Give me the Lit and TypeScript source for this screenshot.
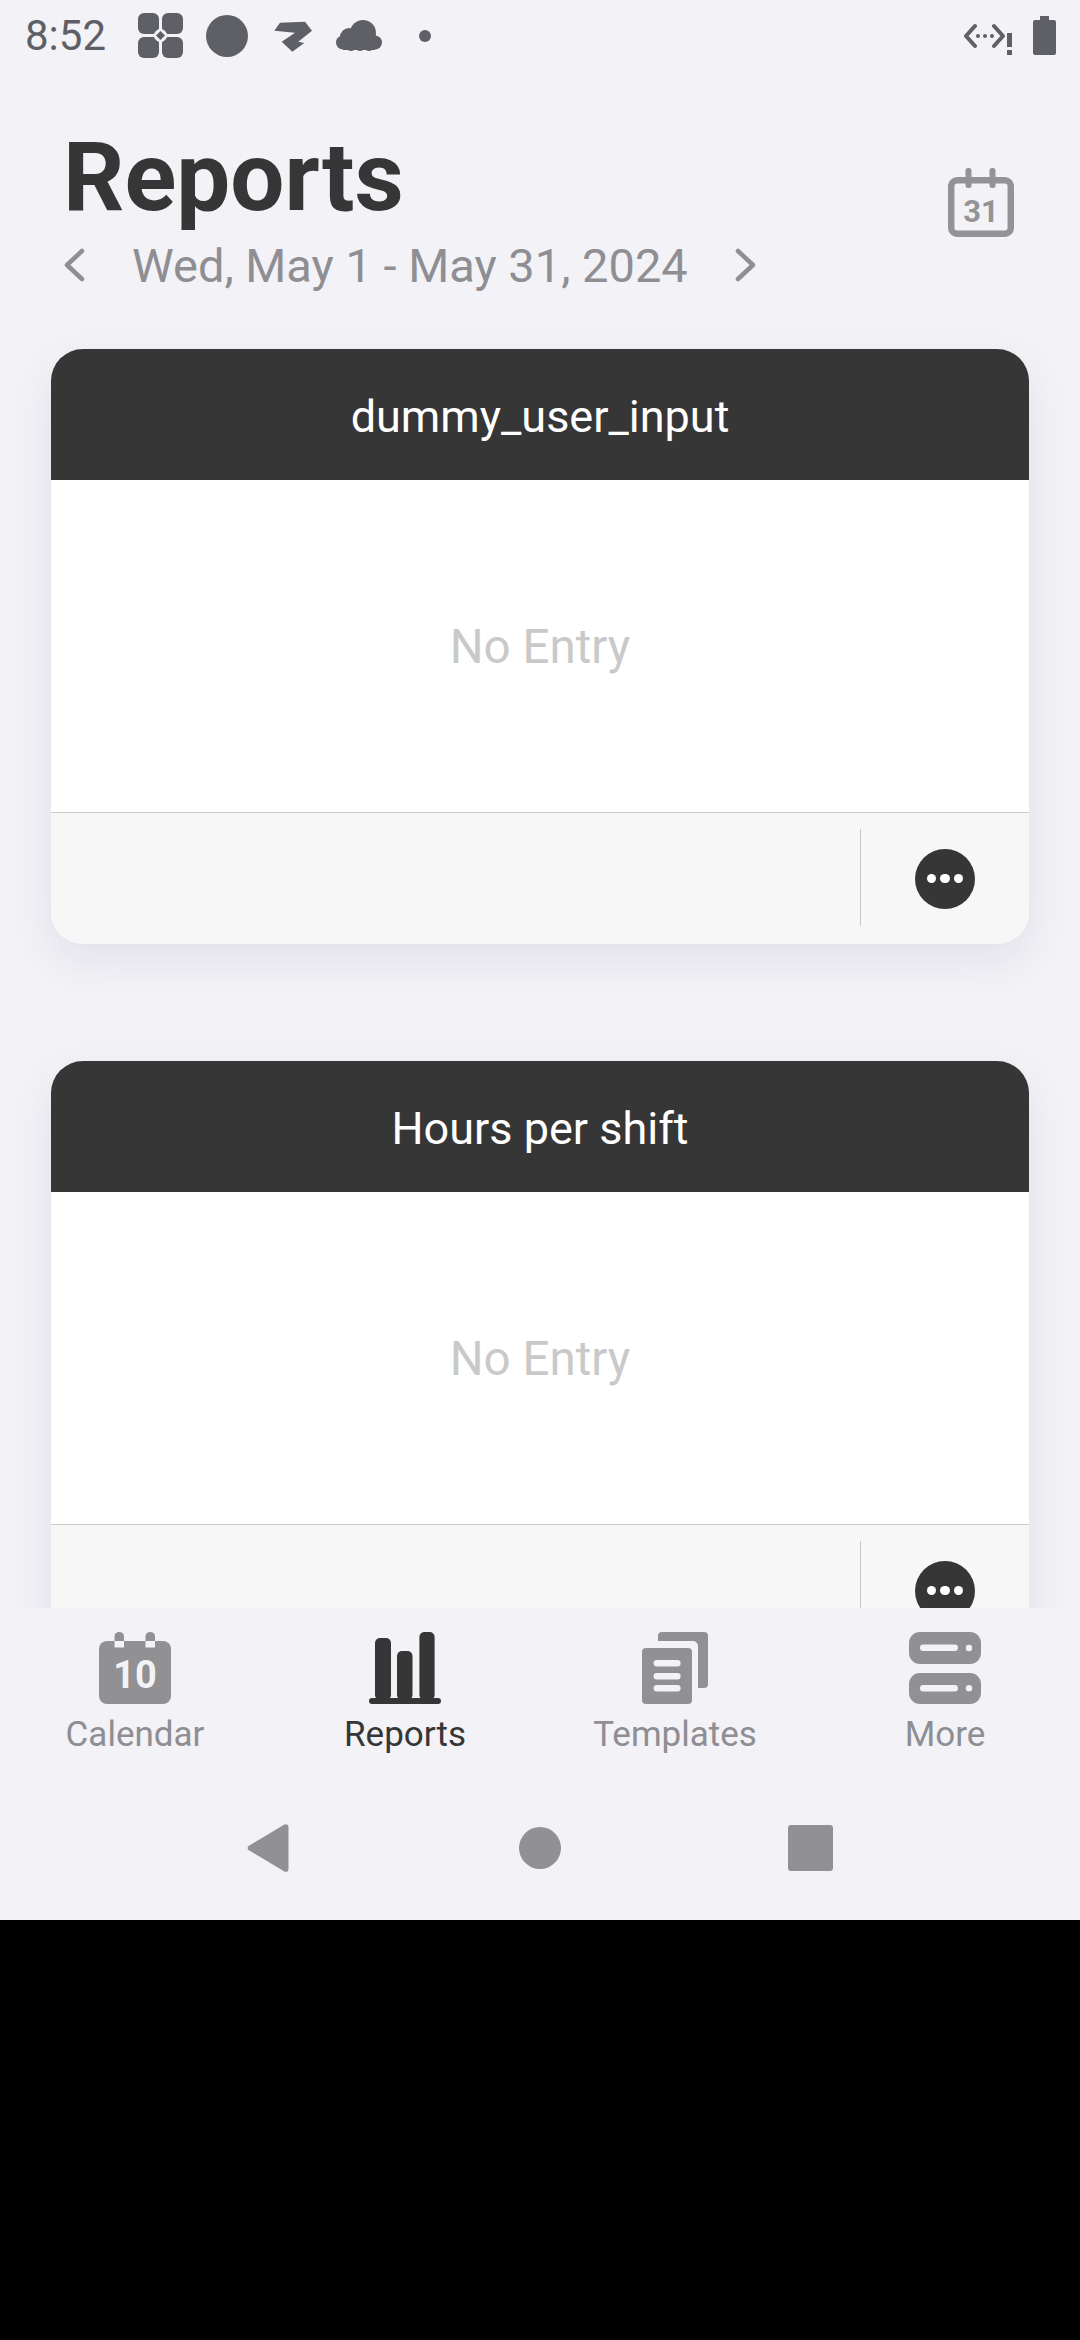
import { LitElement, html, css, svg } from 'lit';
import { customElement } from 'lit/decorators.js';

const cards = ['dummy_user_input', 'Hours per shift'];

@customElement('report-card')
class ReportCard extends LitElement {
  static properties = { title: { type: String } };
  declare title: string;

  static styles = css`
    :host {
      display: block;
      flex: none;
    }
    .card {
      height: 595px;
      border-radius: 32px;
      overflow: hidden;
      display: flex;
      flex-direction: column;
      background: #fff;
      box-shadow: 0 16px 44px rgba(30, 30, 50, 0.08);
    }
    .head {
      height: 131px;
      flex: none;
      box-sizing: border-box;
      padding-top: 3px;
      background: #363636;
      color: #fff;
      font-size: 45px;
      display: flex;
      align-items: center;
      justify-content: center;
    }
    .body {
      flex: 1;
      box-sizing: border-box;
      padding-top: 2px;
      color: #c9c9c9;
      font-size: 47.5px;
      display: flex;
      align-items: center;
      justify-content: center;
    }
    .foot {
      height: 132px;
      flex: none;
      box-sizing: border-box;
      background: #f7f7f7;
      border-top: 1.5px solid #c9c9c9;
      display: flex;
      align-items: center;
    }
    .ghost {
      width: 195px;
      height: 56px;
      margin: 0 auto 10px 9px;
      background: repeating-linear-gradient(90deg, #f8f8f8 0 3px, #f7f7f7 3px 16px, #f6f6f6 16px 19px, #f7f7f7 19px 33px);
    }
    .divider {
      width: 1px;
      height: 97px;
      margin-top: -2px;
      background: #c9c9c9;
    }
    .more {
      width: 168px;
      display: flex;
      justify-content: center;
    }
    .dots {
      width: 60px;
      height: 60px;
      border-radius: 50%;
      background: #363636;
      display: flex;
      align-items: center;
      justify-content: center;
      gap: 4.4px;
    }
    .dots i {
      width: 9.4px;
      height: 9.4px;
      border-radius: 50%;
      background: #fff;
    }
  `;

  render() {
    return html`
      <div class="card">
        <div class="head">${this.title}</div>
        <div class="body">No Entry</div>
        <div class="foot">
          <div class="ghost"></div>
          <div class="divider"></div>
          <div class="more"><div class="dots"><i></i><i></i><i></i></div></div>
        </div>
      </div>
    `;
  }
}

const tabIcons: Record<string, unknown> = {
  Calendar: svg`
    <rect x="15.5" y="0" width="9.5" height="16" rx="4.5" class="fill"/>
    <rect x="46.5" y="0" width="9.5" height="16" rx="4.5" class="fill"/>
    <rect x="0" y="9" width="72" height="63" rx="8" class="fill"/>
    <rect x="15.5" y="9" width="9.5" height="6.5" class="cut"/>
    <rect x="46.5" y="9" width="9.5" height="6.5" class="cut"/>
    <text x="36" y="56" text-anchor="middle" class="num">10</text>`,
  Reports: svg`
    <rect x="6" y="6" width="16" height="62" rx="5" class="dark"/>
    <rect x="28" y="19" width="15.5" height="49" rx="5" class="dark"/>
    <rect x="50.4" y="0" width="15.2" height="68" rx="5" class="dark"/>
    <rect x="0" y="66" width="72" height="6" rx="3" class="dark"/>`,
  Templates: svg`
    <path d="M19 9V4a4 4 0 0 1 4-4h42a4 4 0 0 1 4 4v48a4 4 0 0 1-4 4h-6V14a5 5 0 0 0-5-5z" class="fill"/>
    <rect x="3" y="16" width="50" height="56" rx="4" class="fill"/>
    <rect x="14.6" y="28" width="27" height="6.4" rx="3.2" class="cut"/>
    <rect x="14.6" y="41" width="27" height="6.4" rx="3.2" class="cut"/>
    <rect x="14.6" y="53" width="27" height="6.4" rx="3.2" class="cut"/>`,
  More: svg`
    <rect x="0" y="0" width="72" height="32" rx="11" class="fill"/>
    <rect x="0" y="41" width="72" height="31" rx="11" class="fill"/>
    <rect x="11" y="12.5" width="38" height="6.5" rx="3.2" class="cut"/>
    <circle cx="60" cy="16" r="3.2" class="cut"/>
    <rect x="11" y="53" width="38" height="6.5" rx="3.2" class="cut"/>
    <circle cx="60" cy="56.3" r="3.2" class="cut"/>`,
};

@customElement('app-root')
export class AppRoot extends LitElement {
  static styles = css`
    :host {
      display: block;
      width: 1080px;
      height: 2340px;
      background: #000;
      font-family: Roboto, "Liberation Sans", sans-serif;
    }
    .phone {
      height: 1920px;
      background: #f2f2f7;
      display: flex;
      flex-direction: column;
      overflow: hidden;
    }
    .status {
      height: 72px;
      flex: none;
      display: flex;
      padding-left: 25px;
      color: #5f6065;
      font-size: 42px;
      line-height: 72px;
    }
    .status span {
      width: 113px;
    }
    .status svg {
      fill: #5f6065;
    }
    .status .right {
      margin-left: auto;
      margin-right: 24px;
    }
    .header {
      height: 244px;
      flex: none;
      box-sizing: border-box;
      padding: 54px 66px 0 63px;
      display: flex;
      justify-content: space-between;
      align-items: flex-start;
    }
    h1 {
      margin: 0;
      color: #363636;
      font-size: 96px;
      line-height: 102px;
      font-weight: 700;
    }
    .range {
      display: flex;
      align-items: center;
      gap: 45px;
      margin-top: 10px;
      color: #8e8e93;
      font-size: 47px;
      line-height: 56px;
    }
    .chev {
      width: 24px;
      height: 36px;
      fill: none;
      stroke: #8e8e93;
      stroke-width: 4.5;
      stroke-linecap: round;
      stroke-linejoin: round;
    }
    .cal {
      margin-top: 42px;
      width: 66px;
      height: 69px;
    }
    .cal rect.box {
      fill: none;
      stroke: #939396;
      stroke-width: 6.5;
    }
    .cal rect.peg {
      fill: #939396;
    }
    .cal text {
      fill: #939396;
      font-size: 31px;
      font-weight: 700;
    }
    .list {
      flex: 1;
      min-height: 0;
      overflow: hidden;
      padding: 33px 51px 0;
      display: flex;
      flex-direction: column;
      gap: 117px;
    }
    .tabs {
      height: 168px;
      flex: none;
      box-sizing: border-box;
      background: #f2f2f7;
      padding-top: 24px;
      display: grid;
      grid-template-columns: repeat(4, 270px);
    }
    .tab {
      display: flex;
      flex-direction: column;
      align-items: center;
      color: #8e8e93;
      font-size: 35px;
      line-height: 40px;
      gap: 11px;
    }
    .tab.active {
      color: #363636;
    }
    .tab svg {
      width: 72px;
      height: 72px;
      display: block;
    }
    .fill {
      fill: #919193;
    }
    .dark {
      fill: #363636;
    }
    .cut {
      fill: #f2f2f7;
    }
    .num {
      fill: #f2f2f7;
      font-size: 38px;
      font-weight: 700;
    }
    .nav {
      height: 144px;
      flex: none;
      display: grid;
      grid-template-columns: repeat(3, 270px);
      justify-content: center;
      justify-items: center;
      align-items: center;
    }
    .nav svg {
      fill: #919193;
      display: block;
    }
    .back {
      width: 42px;
      height: 48px;
      margin-right: 5px;
    }
    .home {
      width: 42px;
      height: 42px;
      border-radius: 50%;
      background: #919193;
    }
    .recent {
      width: 45px;
      height: 46px;
      border-radius: 3px;
      background: #919193;
    }
  `;

  render() {
    return html`
      <div class="phone">
        <div class="status">
          <span>8:52</span>
          <svg width="293" height="72" viewBox="138 0 293 72">
            <rect x="138" y="13" width="21" height="21" rx="6"/>
            <rect x="162" y="13" width="21" height="21" rx="6"/>
            <rect x="138" y="37" width="21" height="21" rx="6"/>
            <rect x="162" y="37" width="21" height="21" rx="6"/>
            <circle cx="160.5" cy="35.5" r="6.5" fill="#f2f2f7"/>
            <path d="M160.5 31l4.5 4.5-4.5 4.500-4.500-4.500z"/>
            <circle cx="227" cy="36" r="21"/>
            <path d="M274.300 30.700L280 22.700 305 21.700 312 30.700 298.300 41.700 304.300 43 292.300 51.700 281.700 41.700 295 32.700z"/>
            <circle cx="343" cy="42.500" r="7"/>
            <circle cx="349" cy="37" r="9"/>
            <circle cx="363" cy="33" r="13"/>
            <circle cx="375" cy="42.500" r="7"/>
            <rect x="343" y="38" width="32" height="12"/>
            <circle cx="351" cy="47" r="4"/>
            <circle cx="360" cy="47" r="4"/>
            <circle cx="369" cy="47" r="4"/>
            <circle cx="425" cy="36" r="6"/>
          </svg>
          <svg class="right" width="92" height="72" viewBox="964 0 92 72">
            <path d="M975 26l-9 10 9 10M994 26l9 10-9 10" fill="none" stroke="#5f6065" stroke-width="4" stroke-linecap="round" stroke-linejoin="round"/>
            <circle cx="978" cy="36" r="2"/>
            <circle cx="985" cy="36" r="2"/>
            <circle cx="992" cy="36" r="2"/>
            <rect x="1007" y="33" width="5" height="14"/>
            <rect x="1007" y="50" width="5" height="5"/>
            <path d="M1040 16h9v4h5a2 2 0 0 1 2 2v31a2 2 0 0 1-2 2h-19a2 2 0 0 1-2-2V22a2 2 0 0 1 2-2h5z"/>
          </svg>
        </div>
        <div class="header">
          <div>
            <h1>Reports</h1>
            <div class="range">
              <svg class="chev" viewBox="0 0 24 36"><path d="M19 3L4 17l15 14"/></svg>
              <span>Wed, May 1 - May 31, 2024</span>
              <svg class="chev" viewBox="0 0 24 36"><path d="M5 3l15 14L5 31"/></svg>
            </div>
          </div>
          <svg class="cal" viewBox="0 0 66 69">
            <rect class="box" x="3.200" y="12.200" width="59.600" height="53.600" rx="6"/>
            <rect class="peg" x="17.500" y="0" width="6" height="20" rx="2.500"/>
            <rect class="peg" x="41.500" y="0" width="6" height="20" rx="2.500"/>
            <text x="33" y="54" text-anchor="middle">31</text>
          </svg>
        </div>
        <div class="list">
          ${cards.map((c) => html`<report-card .title=${c}></report-card>`)}
        </div>
        <div class="tabs">
          ${Object.keys(tabIcons).map(
            (name) => html`
              <div class="tab ${name === 'Reports' ? 'active' : ''}">
                <svg viewBox="0 0 72 72">${tabIcons[name]}</svg>
                <span>${name}</span>
              </div>
            `
          )}
        </div>
        <div class="nav">
          <svg class="back" viewBox="0 0 42 48"><path d="M1.500 26a3 3 0 0 1 0-4L37 .8c2-1.300 4.500-.3 4.500 2v42.400c0 2.300-2.500 3.300-4.500 2z"/></svg>
          <div class="home"></div>
          <div class="recent"></div>
        </div>
      </div>
    `;
  }
}
